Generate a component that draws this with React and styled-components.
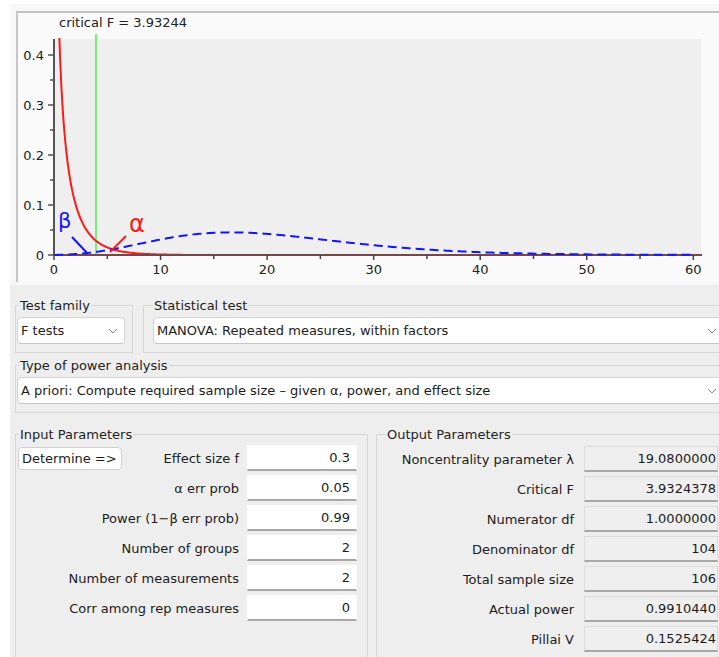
import React, { useMemo } from "react";
import styled, { createGlobalStyle } from "styled-components";

const GlobalStyle = createGlobalStyle`
  html, body { margin: 0; padding: 0; background: #ffffff; overflow: hidden; }
  body {
    font-family: "DejaVu Sans", "Liberation Sans", sans-serif;
    font-size: 13px;
    color: #1c1c1c;
  }
`;

const Window = styled.div`
  margin: 4px 0 0 10px;
  width: 722px;
  height: 653px;
  overflow: hidden;
  background: #eeeeee;
  display: flex;
  flex-direction: column;
`;

const ChartSection = styled.div`
  background: #f7f7f7;
  padding: 7px 0 3px 6px;
`;

const ChartPanel = styled.div`
  border-top: 2px solid #c2c2c2;
  border-left: 2px solid #c6c6c6;
  background: #fafafa;
  height: 269px;
  overflow: hidden;
`;

const Plot = styled.svg`
  display: block;
  font-family: "DejaVu Sans", "Liberation Sans", sans-serif;
`;

const Lower = styled.div`
  display: flex;
  flex-direction: column;
  padding: 13px 1px 0 5px;
`;

const Row = styled.div`
  display: flex;
  flex: none;
  gap: ${(p) => p.$gap || 0}px;
  margin-top: ${(p) => p.$top || 0}px;
  ${(p) => (p.$height ? `height: ${p.$height}px;` : "")}
`;

const Group = styled.fieldset`
  margin: 0;
  min-width: 0;
  box-sizing: border-box;
  border: 1px solid #d6d6d6;
  padding: ${(p) => `${p.$pt}px ${p.$pr}px ${p.$pb}px ${p.$pl}px`};
  ${(p) => (p.$w ? `width: ${p.$w}px; flex: none;` : "flex: 1;")}
`;

const Legend = styled.legend`
  padding: 0 1px;
  margin-left: ${(p) => p.$shift}px;
  font-size: 13px;
  line-height: 15px;
  color: #1e1e1e;
`;

const Select = styled.div`
  display: flex;
  align-items: center;
  justify-content: space-between;
  height: 27px;
  box-sizing: border-box;
  padding: 0 6px 0 3px;
  background: #ffffff;
  border: 1px solid #d4d4d4;
  border-bottom-color: #c6c6c6;
  border-radius: 4px;
  white-space: nowrap;
`;

const Chevron = () => (
  <svg width="10" height="6" viewBox="0 0 10 6">
    <path d="M1 1 L5 5 L9 1" fill="none" stroke="#8c8c8c" strokeWidth="1" />
  </svg>
);

const ParamGrid = styled.div`
  display: grid;
  grid-template-columns: 1fr ${(p) => p.$field}px;
  column-gap: ${(p) => p.$gap}px;
  row-gap: 4px;
  grid-auto-rows: 26px;
`;

const Label = styled.div`
  display: flex;
  align-items: center;
  justify-content: flex-end;
  white-space: nowrap;
  color: #1c1c1c;
`;

const DetermineButton = styled.button`
  margin-right: auto;
  height: 23px;
  width: 104px;
  box-sizing: border-box;
  padding: 0 0 0 3px;
  text-align: left;
  font-family: inherit;
  font-size: 13px;
  color: #1c1c1c;
  background: #ffffff;
  border: 1px solid #d0d0d0;
  border-radius: 4px;
`;

const Field = styled.div`
  display: flex;
  align-items: center;
  justify-content: flex-end;
  box-sizing: border-box;
  background: ${(p) => (p.$readOnly ? "#efefef" : "#ffffff")};
  border: 1px solid ${(p) => (p.$readOnly ? "#dcdcdc" : "#ffffff")};
  border-bottom: 2px solid #a8a8a8;
  padding-right: ${(p) => (p.$readOnly ? 1 : 6)}px;
`;

/* ---- distributions ---- */
const LC = [
  0.99999999999980993, 676.5203681218851, -1259.1392167224028, 771.32342877765313,
  -176.61502916214059, 12.507343278686905, -0.13857109526572012, 9.9843695780195716e-6,
  1.5056327351493116e-7,
];
function lgamma(z) {
  if (z < 0.5) return Math.log(Math.PI / Math.sin(Math.PI * z)) - lgamma(1 - z);
  z -= 1;
  let a = LC[0];
  const t = z + 7.5;
  for (let i = 1; i < 9; i++) a += LC[i] / (z + i);
  return 0.5 * Math.log(2 * Math.PI) + (z + 0.5) * Math.log(t) - t + Math.log(a);
}
function fpdf(x, a, b) {
  if (x <= 0) return 0;
  return Math.exp(
    lgamma((a + b) / 2) - lgamma(a / 2) - lgamma(b / 2) +
      (a / 2) * Math.log(a / b) + (a / 2 - 1) * Math.log(x) -
      ((a + b) / 2) * Math.log(1 + (a * x) / b)
  );
}
function ncfpdf(x, a, b, lam) {
  const h = lam / 2;
  let logp = -h;
  let s = 0;
  for (let k = 0; k < 90; k++) {
    if (k > 0) logp += Math.log(h) - Math.log(k);
    const a2 = a + 2 * k;
    s += Math.exp(logp) * (a / a2) * fpdf((x * a) / a2, a2, b);
  }
  return s;
}

const X0 = 54;
const Y0 = 255;
const SX = 10.655;
const SY = 500;
const px = (x) => X0 + x * SX;
const py = (y) => Y0 - y * SY;

function Chart() {
  const { red, blue } = useMemo(() => {
    const r = [];
    for (let x = 0.3; x <= 12.001; x += 0.04) r.push(`${px(x).toFixed(2)},${py(fpdf(x, 1, 104)).toFixed(2)}`);
    const b = [];
    for (let x = 0.02; x <= 60.001; x += 0.1) b.push(`${px(x).toFixed(2)},${py(ncfpdf(x, 1, 104, 19.08)).toFixed(2)}`);
    return { red: "M" + r.join(" L"), blue: "M" + b.join(" L") };
  }, []);

  const xMajor = [0, 10, 20, 30, 40, 50, 60];
  const xMinor = [5, 15, 25, 35, 45, 55];
  const yMajor = [0, 0.1, 0.2, 0.3, 0.4];
  const yMinor = [0.05, 0.15, 0.25, 0.35];

  return (
    <Plot width="704" height="269" viewBox="18 13 704 269">
      <defs>
        <clipPath id="plotClip">
          <rect x="40" y="38" width="680" height="230" />
        </clipPath>
      </defs>
      <text x="59" y="27" fontSize="13" fill="#222">critical F = 3.93244</text>
      <rect x="54" y="39" width="647" height="216" fill="#efefef" />

      <line x1="96" y1="34" x2="96" y2="255" stroke="#77ee77" strokeWidth="2" />

      <g clipPath="url(#plotClip)">
        <path d={red} fill="none" stroke="#ff1a1a" strokeWidth="2" />
      </g>

      {/* axes */}
      <line x1="54" y1="39" x2="54" y2="256" stroke="#555" strokeWidth="2" />
      <line x1="53" y1="255" x2="702" y2="255" stroke="#744848" strokeWidth="2" />
      <path d={blue} fill="none" stroke="#1414ff" strokeWidth="2" strokeDasharray="9 5" />

      {yMajor.map((v) => (
        <g key={v}>
          <line x1="48" y1={py(v)} x2="54" y2={py(v)} stroke="#555" strokeWidth="1.5" />
          <text x="44" y={py(v) + 4.5} fontSize="13" fill="#222" textAnchor="end">
            {v === 0 ? "0" : v.toFixed(1)}
          </text>
        </g>
      ))}
      {yMinor.map((v) => (
        <line key={v} x1="50" y1={py(v)} x2="54" y2={py(v)} stroke="#555" strokeWidth="1.5" />
      ))}
      {xMajor.map((v) => (
        <g key={v}>
          <line x1={px(v)} y1="255" x2={px(v)} y2="260" stroke="#444" strokeWidth="1.5" />
          <text x={px(v)} y="274" fontSize="13" fill="#222" textAnchor="middle">{v}</text>
        </g>
      ))}
      {xMinor.map((v) => (
        <line key={v} x1={px(v)} y1="255" x2={px(v)} y2="259" stroke="#444" strokeWidth="1.5" />
      ))}

      {/* error annotations */}
      <text x="58" y="228" fontSize="21" fill="#1414ff">β</text>
      <line x1="72" y1="237" x2="88" y2="254" stroke="#1414ff" strokeWidth="2" />
      <text x="129" y="232" fontSize="24" fill="#ff1a1a">α</text>
      <line x1="126" y1="236" x2="110" y2="252" stroke="#ff1a1a" strokeWidth="2" />
    </Plot>
  );
}

const inputs = [
  ["Effect size f", "0.3"],
  ["α err prob", "0.05"],
  ["Power (1−β err prob)", "0.99"],
  ["Number of groups", "2"],
  ["Number of measurements", "2"],
  ["Corr among rep measures", "0"],
];

const outputs = [
  ["Noncentrality parameter λ", "19.0800000"],
  ["Critical F", "3.9324378"],
  ["Numerator df", "1.0000000"],
  ["Denominator df", "104"],
  ["Total sample size", "106"],
  ["Actual power", "0.9910440"],
  ["Pillai V", "0.1525424"],
];

export default function App() {
  return (
    <>
      <GlobalStyle />
      <Window>
        <ChartSection>
          <ChartPanel>
            <Chart />
          </ChartPanel>
        </ChartSection>

        <Lower>
          <Row $gap={10}>
            <Group $w={118} $pt={4} $pr={7} $pb={8} $pl={1}>
              <Legend $shift={2}>Test family</Legend>
              <Select>
                <span>F tests</span>
                <Chevron />
              </Select>
            </Group>
            <Group $pt={4} $pr={6} $pb={8} $pl={9}>
              <Legend $shift={0}>Statistical test</Legend>
              <Select>
                <span>MANOVA: Repeated measures, within factors</span>
                <Chevron />
              </Select>
            </Group>
          </Row>

          <Row $top={5}>
            <Group $pt={4} $pr={6} $pb={8} $pl={1}>
              <Legend $shift={2}>Type of power analysis</Legend>
              <Select>
                <span>A priori: Compute required sample size – given α, power, and effect size</span>
                <Chevron />
              </Select>
            </Group>
          </Row>

          <Row $top={14} $gap={8} $height={250}>
            <Group $w={353} $pt={3} $pr={10} $pb={8} $pl={2}>
              <Legend $shift={1}>Input Parameters</Legend>
              <ParamGrid $field={110} $gap={8}>
                {inputs.map(([label, value], i) => (
                  <React.Fragment key={label}>
                    <Label>
                      {i === 0 && <DetermineButton>Determine =&gt;</DetermineButton>}
                      {label}
                    </Label>
                    <Field>{value}</Field>
                  </React.Fragment>
                ))}
              </ParamGrid>
            </Group>
            <Group $pt={4} $pr={12} $pb={8} $pl={4}>
              <Legend $shift={5}>Output Parameters</Legend>
              <ParamGrid $field={134} $gap={10}>
                {outputs.map(([label, value]) => (
                  <React.Fragment key={label}>
                    <Label>{label}</Label>
                    <Field $readOnly>{value}</Field>
                  </React.Fragment>
                ))}
              </ParamGrid>
            </Group>
          </Row>
        </Lower>
      </Window>
    </>
  );
}
